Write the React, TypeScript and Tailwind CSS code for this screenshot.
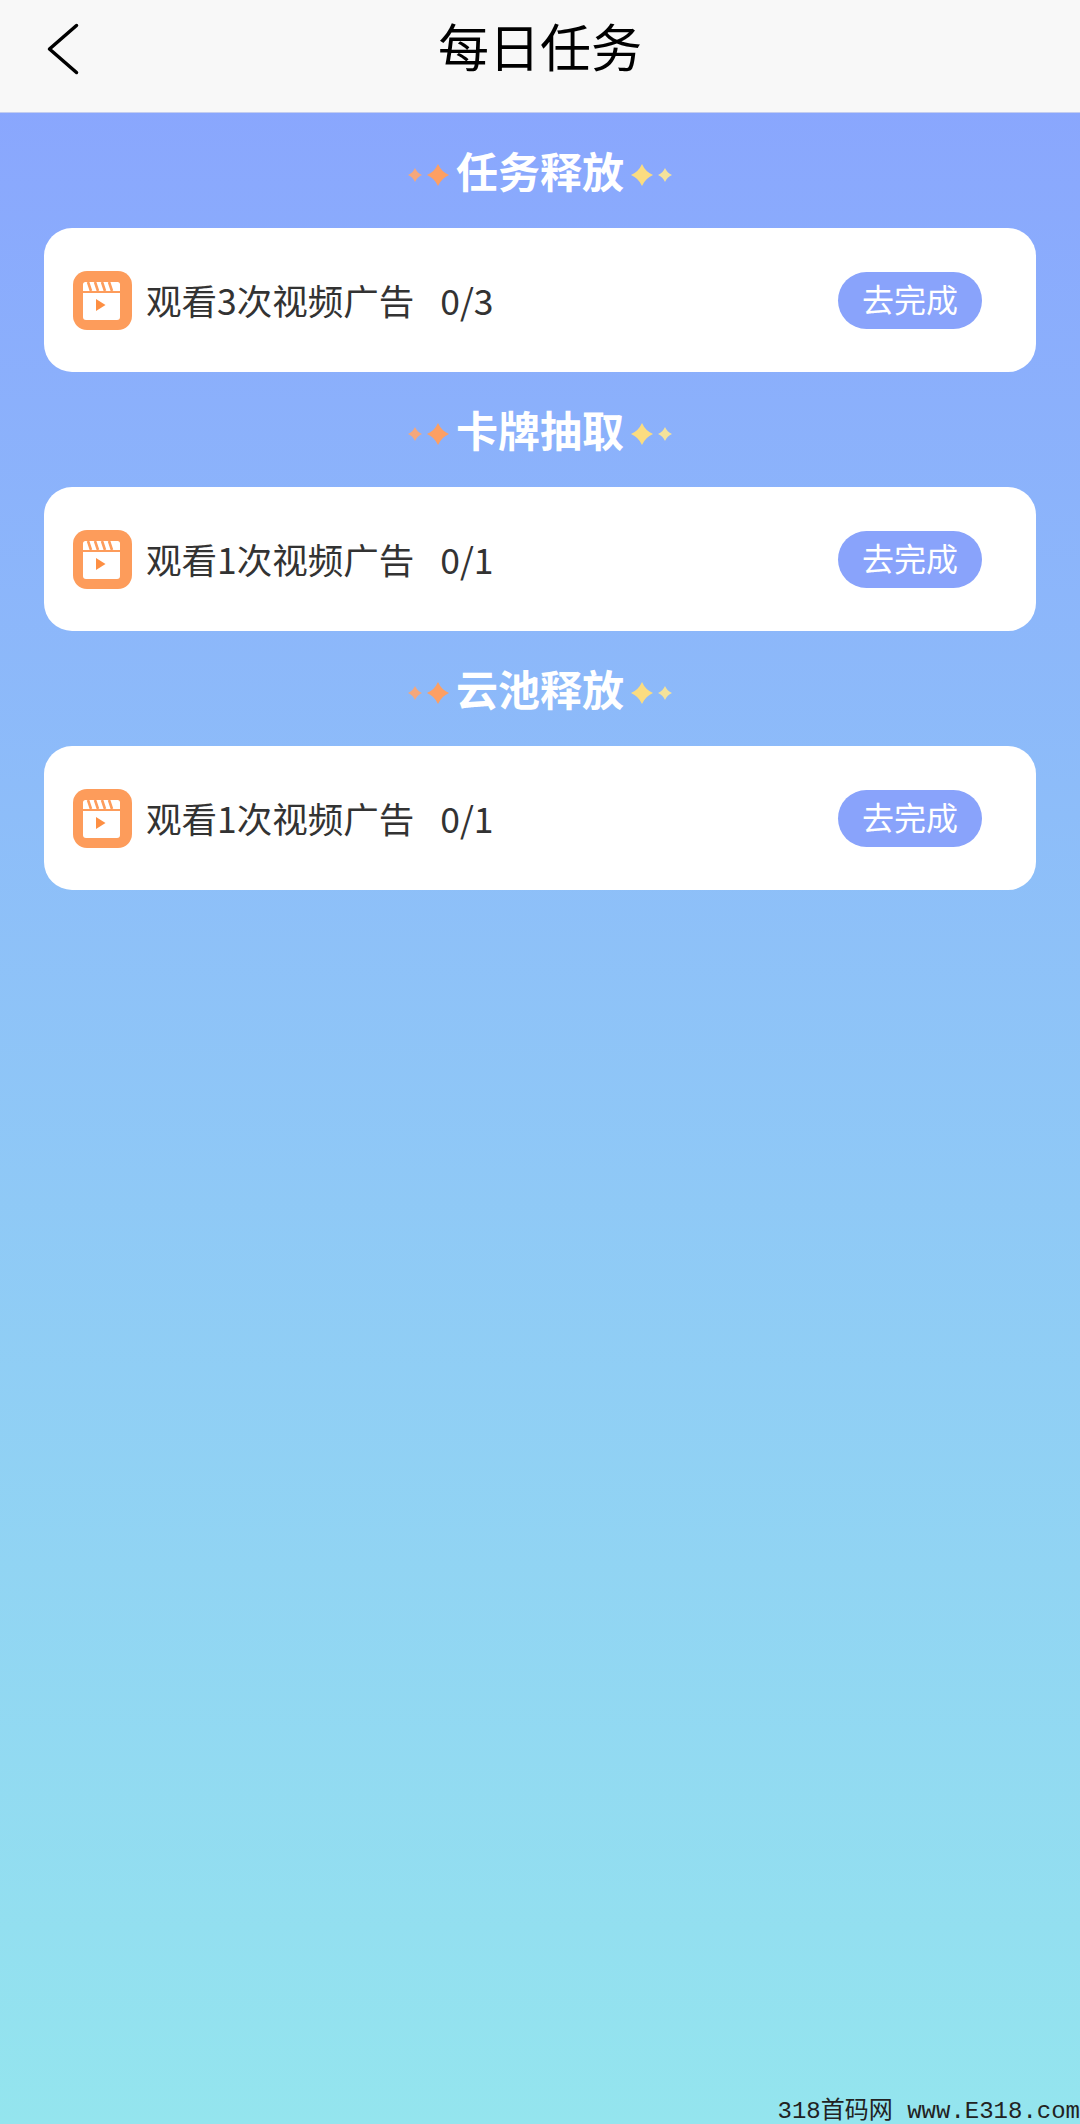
const sections = [
  { title: "任务释放", label: "观看3次视频广告", count: "0/3" },
  { title: "卡牌抽取", label: "观看1次视频广告", count: "0/1" },
  { title: "云池释放", label: "观看1次视频广告", count: "0/1" },
];

function Star({ size, color }: { size: number; color: string }) {
  return (
    <svg width={size} height={size} viewBox="0 0 20 20" className="shrink-0 blur-[0.4px]">
      <path d="M10 0Q13 7 20 10Q13 13 10 20Q7 13 0 10Q7 7 10 0Z" fill={color} />
    </svg>
  );
}

function VideoIcon() {
  return (
    <svg width="59" height="59" viewBox="0 0 59 59" className="shrink-0 blur-[0.5px]">
      <rect width="59" height="59" rx="14" fill="#fd9c5b" />
      <path d="M10 13.500a2.500 2.500 0 0 1 2.500-2.500h32a2.500 2.500 0 0 1 2.500 2.500V20H10Z" fill="#fff" />
      <g stroke="#fd9c5b" strokeWidth="2.600">
        <path d="M15 11l3 9M22 11l3 9M29 11l3 9M36 11l3 9" />
      </g>
      <path d="M10 22h37v24a3 3 0 0 1-3 3H13a3 3 0 0 1-3-3Z" fill="#fff" />
      <path d="M23 28v12l9.500-6Z" fill="#fd8f43" />
    </svg>
  );
}

function BackIcon() {
  return (
    <svg width="32" height="52" viewBox="0 0 32 52" fill="none" className="shrink-0">
      <path d="M29.500 2.500L2.500 26L29.500 49.500" stroke="#000" strokeWidth="3.500" strokeLinecap="round" strokeLinejoin="round" />
    </svg>
  );
}

export default function App() {
  return (
    <div className="relative flex h-[2124px] w-[1080px] flex-col overflow-hidden bg-gradient-to-b from-[#89a3fe] to-[#94e5ee] font-['Noto_Sans_CJK_SC','Noto_Sans',sans-serif]">
      <header className="relative flex h-[113px] shrink-0 items-center justify-center border-b border-[#c3cdf0] bg-[#f8f8f8]">
        <div className="absolute left-[47px] top-[23px]">
          <BackIcon />
        </div>
        <h1 className="-mt-[22px] text-[51px] font-normal leading-[70px] text-black">每日任务</h1>
      </header>

      <main className="flex flex-col px-[44px]">
        {sections.map((s) => (
          <section key={s.title} className="flex flex-col">
            <div className="flex h-[115px] items-center justify-center pb-[1px]">
              <div className="flex items-center gap-[5px] pt-[10px]">
                <Star size={14} color="#f4a77c" />
                <Star size={22} color="#fd9f63" />
              </div>
              <h2 className="mx-[7px] text-[42px] font-bold leading-[56px] text-white">{s.title}</h2>
              <div className="flex items-center gap-[5px] pt-[10px]">
                <Star size={22} color="#fbdc80" />
                <Star size={14} color="#f4e29a" />
              </div>
            </div>
            <div className="flex h-[144px] items-center rounded-[28px] bg-white pl-[29px] pr-[54px]">
              <VideoIcon />
              <span className="ml-[14px] text-[35.500px] leading-[50px] text-[#333]">{s.label}</span>
              <span className="ml-[26px] text-[35.500px] leading-[50px] text-[#333]">{s.count}</span>
              <button className="ml-auto flex h-[57px] w-[144px] items-center justify-center rounded-full bg-[#89a3fb] pb-[5px] text-[32px] leading-none text-white">
                去完成
              </button>
            </div>
          </section>
        ))}
      </main>

      <div className="absolute bottom-[-6px] right-[0px] whitespace-pre font-['Liberation_Mono','Noto_Sans_CJK_SC',monospace] text-[24px] leading-[36px] text-[#222]">
        318首码网 www.E318.com
      </div>
    </div>
  );
}
